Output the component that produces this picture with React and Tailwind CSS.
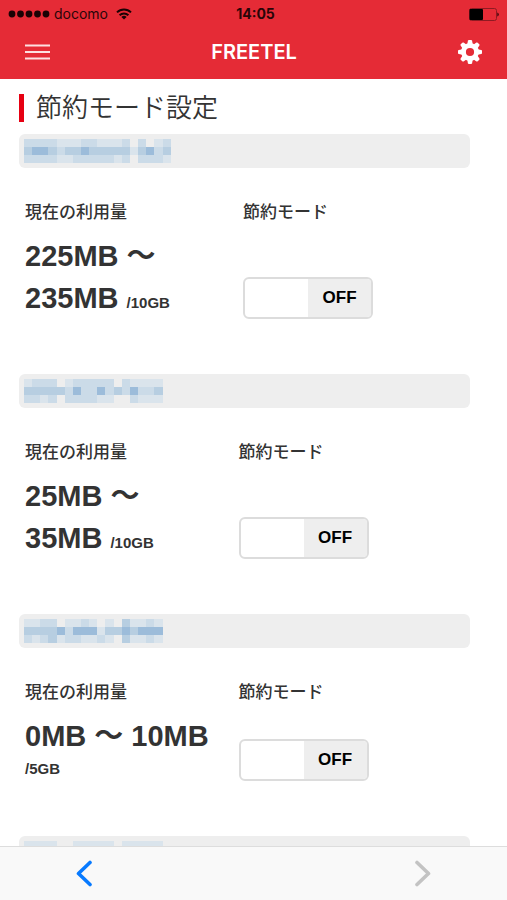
import { useState } from "react"

const MOSAIC_COLORS = ["", "#dae4ec", "#cbdbe8", "#b7cee1", "#9cbcda"]
const CELL_WIDTH = 8.15

const LINES = [
    {
        id: 1,
        from: "225MB 〜",
        to: "235MB",
        limit: "/10GB",
        columns: "grid-cols-[49%_1fr]",
        mosaic: ["222211122111202012", "344323343333313423", "222211222221202221"],
    },
    {
        id: 2,
        from: "25MB 〜",
        to: "35MB",
        limit: "/10GB",
        columns: "grid-cols-[48%_1fr]",
        mosaic: ["12220122222021111", "33333242242324223", "22120222211002111"],
    },
    {
        id: 3,
        from: "0MB 〜",
        to: "10MB",
        limit: "/5GB",
        columns: "grid-cols-[48%_1fr]",
        mosaic: ["11220112101031121", "33334244413343444", "21231221121031121"],
    },
]

const NEXT_MOSAIC = ["11110011111011111", "11110111111011111", "11110111111011111"]

function Mosaic({ rows }) {
    const width = rows[0].length * CELL_WIDTH
    return (
        <svg width={width} height="24" viewBox={`0 0 ${width} 24`} shapeRendering="crispEdges" aria-hidden="true">
            {rows.map((row, y) =>
                [...row].map((level, x) =>
                    level === "0" ? null : (
                        <rect key={`${x}-${y}`} x={x * CELL_WIDTH} y={y * 8} width={CELL_WIDTH} height="8" fill={MOSAIC_COLORS[level]} />
                    )
                )
            )}
        </svg>
    )
}

function NumberBar({ rows }) {
    return (
        <div className="flex h-[34px] items-center rounded-md bg-[#eeeeee] px-[5px]">
            <Mosaic rows={rows} />
        </div>
    )
}

function Toggle({ labelId }) {
    const [on, setOn] = useState(false)
    return (
        <button
            type="button"
            role="switch"
            aria-checked={on}
            aria-labelledby={labelId}
            onClick={() => setOn(!on)}
            className="flex h-[42px] w-[130px] overflow-hidden rounded-md border-2 border-[#dcdcdc] bg-white text-[17px] font-bold text-black"
        >
            <span className={on ? "flex h-full w-1/2 items-center justify-center bg-[#eeeeee]" : "h-full w-1/2"}>{on && "ON"}</span>
            <span className={on ? "h-full w-1/2" : "flex h-full w-1/2 items-center justify-center bg-[#eeeeee]"}>{!on && "OFF"}</span>
        </button>
    )
}

function LineSection({ line }) {
    const labelId = `saving-${line.id}`
    return (
        <section className="mb-[55px]">
            <NumberBar rows={line.mosaic} />
            <div className={`mt-[31px] grid ${line.columns} pl-[6px]`}>
                <div className="pr-5">
                    <h2 className="mb-2 text-[17px] leading-7 font-medium">現在の利用量</h2>
                    <p className="text-[15px] leading-6 font-bold">
                        <span className="text-[29px] leading-[42px]">{line.from} </span>
                        <span className="text-[29px] leading-[42px]">{line.to} </span>
                        <span>{line.limit}</span>
                    </p>
                </div>
                <div className="flex flex-col items-start justify-between">
                    <h2 id={labelId} className="text-[17px] leading-7 font-medium">節約モード</h2>
                    <Toggle labelId={labelId} />
                </div>
            </div>
        </section>
    )
}

function StatusBar() {
    return (
        <div className="grid h-7 grid-cols-[1fr_auto_1fr] items-center px-2 text-sm text-[#2a0508]">
            <div className="flex items-center gap-1">
                <svg width="42" height="8" viewBox="0 0 42 8" fill="#1a0204" aria-hidden="true">
                    {[4, 12.5, 21, 29.5, 38].map((cx) => (
                        <circle key={cx} cx={cx} cy="4" r="3.4" />
                    ))}
                </svg>
                <span>docomo</span>
                <svg className="ml-1" width="16" height="12" viewBox="0 0 16 12" fill="none" stroke="#1a0204" strokeWidth="2" aria-hidden="true">
                    <path d="M1 4.4a10 10 0 0 1 14 0" />
                    <path d="M3.6 7.2a6.3 6.3 0 0 1 8.8 0" />
                    <path d="M8 11.6 5.4 8.9a3.8 3.8 0 0 1 5.2 0z" fill="#1a0204" stroke="none" />
                </svg>
            </div>
            <span className="pl-1 text-center font-bold">14:05</span>
            <svg className="justify-self-end" width="30" height="13" viewBox="0 0 30 13" aria-hidden="true">
                <rect x="0.5" y="0.5" width="27" height="12" rx="2" fill="none" stroke="#8f1a22" />
                <rect x="0.5" y="1" width="13.5" height="11" rx="1" fill="#000" />
                <path d="M28.3 4.5q1.5.6 1.5 2t-1.5 2z" fill="#3a070b" />
            </svg>
        </div>
    )
}

function GearIcon() {
    return (
        <svg width="24" height="24" viewBox="-12 -12 24 24" fill="#fff" aria-hidden="true">
            {[0, 45, 90, 135, 180, 225, 270, 315].map((angle) => (
                <path key={angle} transform={`rotate(${angle})`} d="M-2.8-7.5-2.1-11.2Q-1.9-12-1.1-12H1.1Q1.9-12 2.1-11.2L2.8-7.5z" />
            ))}
            <circle r="6.5" fill="none" stroke="#fff" strokeWidth="4.8" />
        </svg>
    )
}

export default function App() {
    return (
        <div className="flex h-screen flex-col overflow-hidden bg-white font-['Liberation_Sans','Noto_Sans_CJK_JP',sans-serif] text-[#333333]">
            {/* Header */}
            <header className="shrink-0 bg-[#e52b36] font-['Inter',sans-serif]">
                <StatusBar />
                <div className="flex h-[51px] items-center justify-between px-[25px] pb-1">
                    <button type="button" aria-label="メニュー">
                        <svg width="25" height="16" viewBox="0 0 25 16" stroke="#fde0e1" strokeWidth="2" aria-hidden="true">
                            <path d="M0 1.5h25M0 8h25M0 14.5h25" />
                        </svg>
                    </button>
                    <h1 className="text-xl font-semibold text-white">FREETEL</h1>
                    <button type="button" aria-label="設定">
                        <GearIcon />
                    </button>
                </div>
            </header>

            {/* Content */}
            <main className="min-h-0 flex-1 overflow-hidden pt-[15px] pr-[37px] pl-[19px]">
                <h2 className="mb-3 border-l-5 border-[#e60012] pl-3 text-[26px] leading-7 font-[350]">節約モード設定</h2>
                {LINES.map((line) => (
                    <LineSection key={line.id} line={line} />
                ))}
                <NumberBar rows={NEXT_MOSAIC} />
            </main>

            {/* Browser toolbar */}
            <nav className="flex h-[54px] shrink-0 items-center justify-between border-t border-[#dddddd] bg-[#f9f9f9] px-[76px]">
                <button type="button" aria-label="戻る">
                    <svg width="16" height="28" viewBox="0 0 16 28" fill="none" stroke="#077aff" strokeWidth="3.6" strokeLinecap="round" strokeLinejoin="round" aria-hidden="true">
                        <path d="M14 2.5 2.5 13.5 14 24.5" />
                    </svg>
                </button>
                <button type="button" aria-label="進む" disabled>
                    <svg width="16" height="28" viewBox="0 0 16 28" fill="none" stroke="#c3c3c3" strokeWidth="3.6" strokeLinecap="round" strokeLinejoin="round" aria-hidden="true">
                        <path d="M2 2.5 13.5 13.5 2 24.5" />
                    </svg>
                </button>
            </nav>
        </div>
    )
}
